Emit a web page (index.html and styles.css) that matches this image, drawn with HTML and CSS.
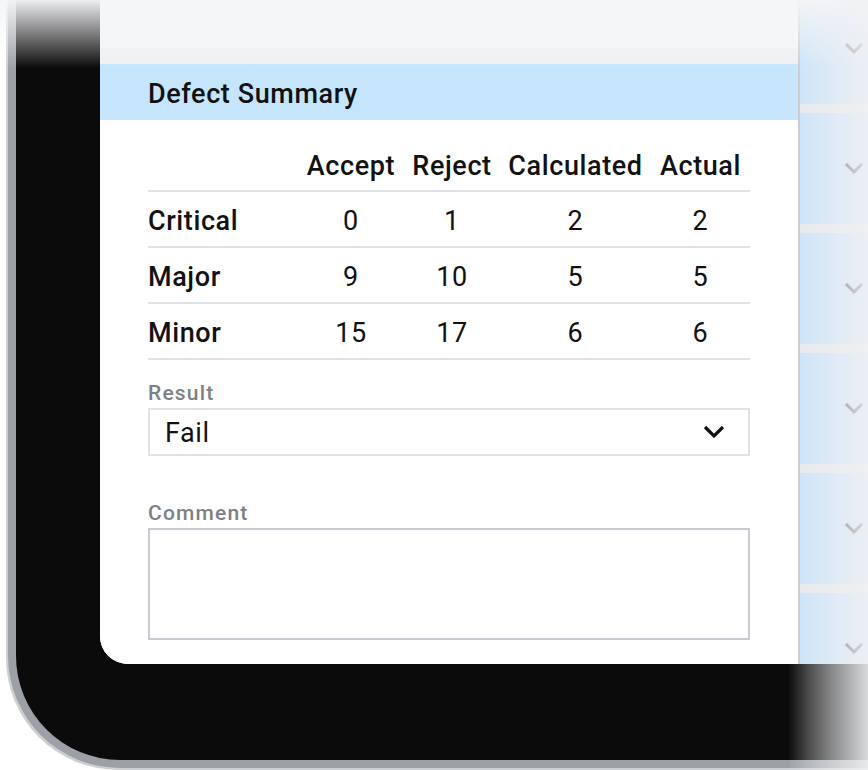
FILE: index.html
```html
<!DOCTYPE html>
<html lang="en">
<head>
<meta charset="utf-8">
<title>Defect Summary</title>
<link rel="stylesheet" href="styles.css">
</head>
<body>
<div class="page">
  <div class="device">
    <div class="screen">
      <main class="main-col">
        <div class="top-card"></div>
        <section class="card">
          <h2 class="card-header">Defect Summary</h2>
          <div class="card-body">
            <div class="defect-table">
              <div class="row head">
                <span class="cell label"></span>
                <span class="cell">Accept</span>
                <span class="cell">Reject</span>
                <span class="cell">Calculated</span>
                <span class="cell">Actual</span>
              </div>
              <div class="row">
                <span class="cell label">Critical</span>
                <span class="cell">0</span>
                <span class="cell">1</span>
                <span class="cell">2</span>
                <span class="cell">2</span>
              </div>
              <div class="row">
                <span class="cell label">Major</span>
                <span class="cell">9</span>
                <span class="cell">10</span>
                <span class="cell">5</span>
                <span class="cell">5</span>
              </div>
              <div class="row">
                <span class="cell label">Minor</span>
                <span class="cell">15</span>
                <span class="cell">17</span>
                <span class="cell">6</span>
                <span class="cell">6</span>
              </div>
            </div>
            <div class="field-label">Result</div>
            <div class="select">
              <span class="select-value">Fail</span>
              <svg class="select-chevron" width="22" height="14" viewBox="0 0 22 14"><path d="M2 2 L11 11 L20 2" fill="none" stroke="#111" stroke-width="3.2"/></svg>
            </div>
            <div class="field-label comment-label">Comment</div>
            <div class="textarea"></div>
          </div>
        </section>
      </main>
      <div class="divider"></div>
      <aside class="side-list">
        <div class="side-card"><svg class="side-chevron" width="20" height="13" viewBox="0 0 20 13"><path d="M2 2 L10 10 L18 2" fill="none" stroke="#333" stroke-width="3"/></svg></div>
        <div class="side-card"><svg class="side-chevron" width="20" height="13" viewBox="0 0 20 13"><path d="M2 2 L10 10 L18 2" fill="none" stroke="#333" stroke-width="3"/></svg></div>
        <div class="side-card"><svg class="side-chevron" width="20" height="13" viewBox="0 0 20 13"><path d="M2 2 L10 10 L18 2" fill="none" stroke="#333" stroke-width="3"/></svg></div>
        <div class="side-card"><svg class="side-chevron" width="20" height="13" viewBox="0 0 20 13"><path d="M2 2 L10 10 L18 2" fill="none" stroke="#333" stroke-width="3"/></svg></div>
        <div class="side-card"><svg class="side-chevron" width="20" height="13" viewBox="0 0 20 13"><path d="M2 2 L10 10 L18 2" fill="none" stroke="#333" stroke-width="3"/></svg></div>
        <div class="side-card"><svg class="side-chevron" width="20" height="13" viewBox="0 0 20 13"><path d="M2 2 L10 10 L18 2" fill="none" stroke="#333" stroke-width="3"/></svg></div>
      </aside>
    </div>
  </div>
  <div class="fade-top"></div>
  <div class="fade-right"></div>
</div>
</body>
</html>
```
FILE: styles.css
```css
* { box-sizing: border-box; }
html, body { margin: 0; padding: 0; background: #fff; }
body { font-family: Roboto, "Noto Sans", Arial, sans-serif; color: #121212; }

.page {
  position: relative;
  width: 868px;
  height: 770px;
  overflow: hidden;
  background: #fff;
  padding-left: 8px;
}

.device {
  width: 1000px;
  background: #0b0b0b;
  border-left: 8px solid #9da1a6;
  border-bottom: 8px solid #9da1a6;
  border-bottom-left-radius: 112px;
  box-shadow: -2px 2px 0 #cdd0d3;
  padding: 0 0 96px 84px;
}

.screen {
  height: 664px;
  border-bottom-left-radius: 28px;
  overflow: hidden;
  display: grid;
  grid-template-columns: 698px 2px 1fr;
  background: #eceef1;
}

.main-col {
  display: flex;
  flex-direction: column;
  gap: 16px;
  background: #eef0f2;
}

.top-card {
  height: 48px;
  background: #f5f6f8;
}

.card {
  flex: 1;
  background: #fff;
  display: flex;
  flex-direction: column;
}

.card-header {
  margin: 0;
  height: 56px;
  background: #c5e5fc;
  display: flex;
  align-items: center;
  padding: 3px 0 0 48px;
  font-size: 27px;
  line-height: 30px;
  font-weight: 500;
  letter-spacing: 0.6px;
  color: #111;
}

.card-body {
  padding: 31px 48px 24px 48px;
  display: flex;
  flex-direction: column;
}

.defect-table {
  display: flex;
  flex-direction: column;
  width: 602px;
}

.row {
  display: grid;
  grid-template-columns: 150px 106px 96px 151px 99px;
  border-bottom: 2px solid #dfe2e7;
  padding: 14px 0 10px;
  font-size: 27px;
  line-height: 30px;
  letter-spacing: 0.6px;
}

.row.head {
  padding: 0 0 9px;
  font-weight: 500;
}

.cell { text-align: center; }
.cell.label { text-align: left; font-weight: 500; }

.field-label {
  margin-top: 21px;
  margin-bottom: 3px;
  font-size: 21px;
  line-height: 24px;
  font-weight: 500;
  color: #7c8087;
  letter-spacing: 1.2px;
}

.comment-label { margin-top: 45px; }

.select {
  width: 602px;
  height: 48px;
  border: 2px solid #dfe2e7;
  display: flex;
  align-items: center;
  justify-content: space-between;
  padding: 2px 23px 0 15px;
}

.select-value {
  font-size: 27px;
  line-height: 30px;
  letter-spacing: 0.6px;
}

.select-chevron { margin-top: -2px; }

.textarea {
  width: 602px;
  height: 112px;
  border: 2px solid #c8ccd2;
}

.divider { background: #c4c8ce; }

.side-list {
  display: flex;
  flex-direction: column;
  gap: 9px;
  margin-top: -7px;
  background: #e6e8eb;
}

.side-card {
  height: 111px;
  flex: none;
  background: #c7e2f9;
  display: flex;
  align-items: center;
  padding-left: 44px;
}

.fade-top {
  position: absolute;
  left: 0;
  top: 0;
  width: 868px;
  height: 70px;
  background: linear-gradient(to bottom, rgba(245,246,248,0.97) 0px, rgba(245,246,248,0) 68px);
  pointer-events: none;
}

.fade-right {
  position: absolute;
  top: 0;
  left: 788px;
  width: 80px;
  height: 770px;
  background: linear-gradient(to right, rgba(240,241,243,0) 0px, rgba(240,241,243,0.3) 22px, rgba(240,241,243,0.53) 42px, rgba(240,241,243,0.72) 62px, rgba(240,241,243,0.9) 80px);
  pointer-events: none;
}
```
